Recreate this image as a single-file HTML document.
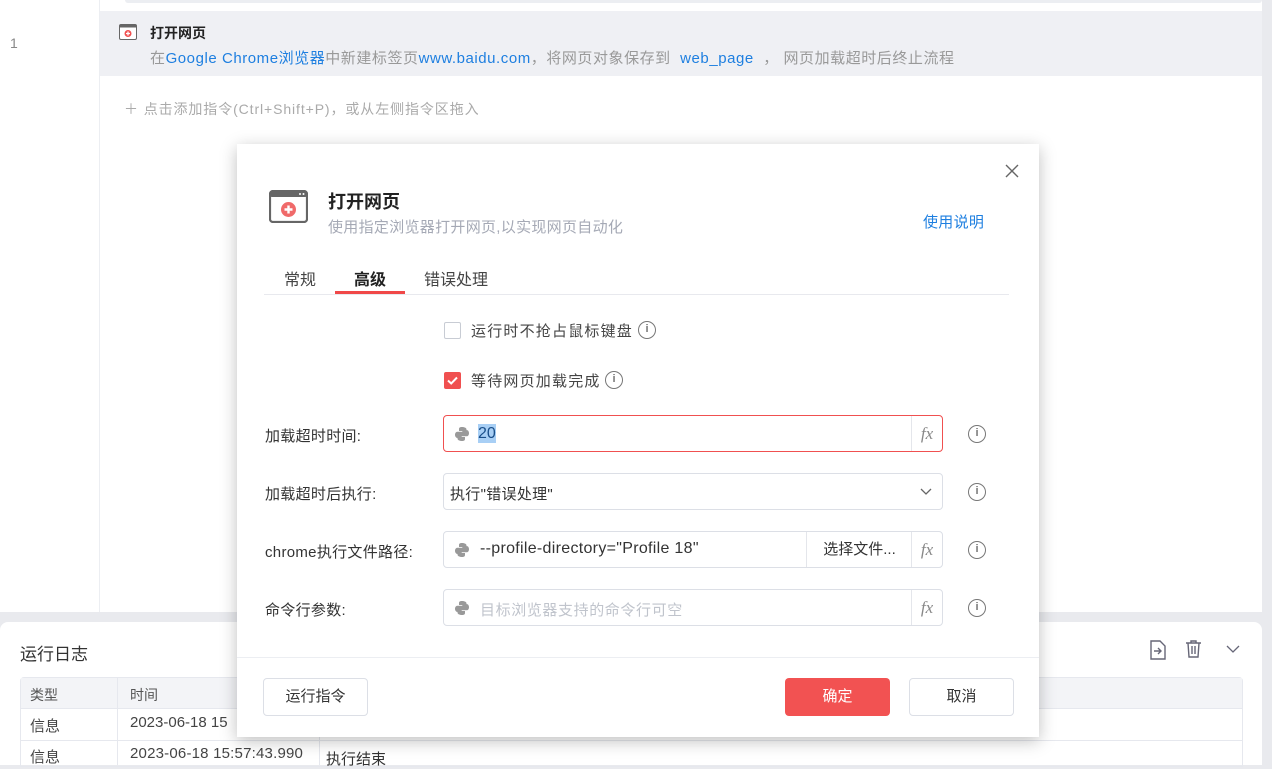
<!DOCTYPE html><html><head><meta charset="utf-8"><style>
*{box-sizing:border-box;margin:0;padding:0}
body{width:1272px;height:765px;overflow:hidden;background:#e9eaee;font-family:"Liberation Sans","Noto Sans CJK SC",sans-serif;position:relative;color:#333}
.abs{position:absolute}
.fx{font-family:"Liberation Serif",serif;font-style:italic;color:#888;font-size:17px}
.info{width:18px;height:18px;border:1.5px solid #777;border-radius:50%;font-size:11px;color:#777;text-align:center;line-height:15px;font-family:"Liberation Sans",sans-serif;font-weight:bold}
.inp{position:absolute;left:443px;width:500px;height:37px;border:1px solid #dcdfe6;border-radius:4px;background:#fff}
.lbl{position:absolute;left:265px;font-size:15px;color:#333;letter-spacing:.3px}
.py{position:absolute;left:10px;top:10px;width:16px;height:16px}
.fxb{position:absolute;right:0;top:0;width:31px;height:100%;border-left:1px solid #e4e6eb;text-align:center;line-height:35px}
</style></head><body>
<div class="abs" style="left:0;top:0;width:1262px;height:612px;background:#fff"></div>
<div class="abs" style="left:125px;top:0;width:1137px;height:3px;background:#eceef2;border-radius:0 0 6px 6px"></div>
<div class="abs" style="left:99px;top:0;width:1px;height:612px;background:#eceef2"></div>
<div class="abs" style="left:100px;top:11px;width:1162px;height:65px;background:#eff0f4"></div>
<div class="abs" style="left:10px;top:35px;font-size:14px;color:#888">1</div>
<svg class="abs" style="left:119px;top:24px" width="18" height="16" viewBox="0 0 18 16"><rect x="0.5" y="0.5" width="17" height="15" rx="1.5" fill="#fff" stroke="#666"/><rect x="0.5" y="0.5" width="17" height="3" fill="#666"/><circle cx="9" cy="9.5" r="3.5" fill="#f05050"/><path d="M9 7.5v4M7 9.5h4" stroke="#fff" stroke-width="1.3"/></svg>
<div class="abs" style="left:150px;top:23px;font-size:14px;font-weight:bold;color:#222">打开网页</div>
<div class="abs" style="left:150px;top:47px;font-size:15px;color:#999;white-space:nowrap;letter-spacing:.55px">在<span style="color:#1e7fe0">Google Chrome浏览器</span>中新建标签页<span style="color:#1e7fe0">www.baidu.com</span>，将网页对象保存到 <span style="color:#1e7fe0">&nbsp;web_page&nbsp;</span> ， 网页加载超时后终止流程</div>
<div class="abs" style="left:124px;top:99px;font-size:14px;color:#aaa;letter-spacing:.9px">＋ 点击添加指令(Ctrl+Shift+P)，或从左侧指令区拖入</div>

<div class="abs" style="left:0;top:622px;width:1262px;height:143px;background:#fff;border-radius:8px 8px 0 0"></div>
<div class="abs" style="left:20px;top:640px;font-size:17px;color:#333">运行日志</div>
<svg class="abs" style="left:1149px;top:640px" width="18" height="20" viewBox="0 0 18 20" fill="none" stroke="#667" stroke-width="1.4"><path d="M2 1h9l5 5v13H2z"/><path d="M5 11h7M9 8l3 3-3 3"/></svg>
<svg class="abs" style="left:1185px;top:640px" width="17" height="18" viewBox="0 0 17 18" fill="none" stroke="#667" stroke-width="1.4"><path d="M1 3h15M6 3V1h5v2M3 3l1 14h9l1-14M7 6v8M10 6v8"/></svg>
<svg class="abs" style="left:1226px;top:645px" width="14" height="9"><path d="M1 1l6 6 6-6" fill="none" stroke="#667" stroke-width="1.3"/></svg>
<div class="abs" style="left:20px;top:677px;width:1223px;height:90px;border:1px solid #e6e8ee;border-radius:4px 4px 0 0"></div>
<div class="abs" style="left:21px;top:678px;width:1221px;height:31px;background:#f3f4f7;border-bottom:1px solid #e6e8ee"></div>
<div class="abs" style="left:21px;top:740px;width:1221px;height:1px;background:#e6e8ee"></div>
<div class="abs" style="left:117px;top:678px;width:1px;height:87px;background:#e6e8ee"></div>
<div class="abs" style="left:319px;top:678px;width:1px;height:87px;background:#e6e8ee"></div>
<div class="abs" style="left:30px;top:685px;font-size:14px;color:#555">类型</div>
<div class="abs" style="left:130px;top:685px;font-size:14px;color:#555">时间</div>
<div class="abs" style="left:30px;top:715px;font-size:15px;color:#444">信息</div>
<div class="abs" style="left:130px;top:714px;font-size:15px;color:#444">2023-06-18 15</div>
<div class="abs" style="left:30px;top:746px;font-size:15px;color:#444">信息</div>
<div class="abs" style="left:130px;top:745px;font-size:15px;color:#444;letter-spacing:.2px">2023-06-18 15:57:43.990</div>
<div class="abs" style="left:326px;top:748px;font-size:15px;color:#333">执行结束</div>

<div class="abs" style="left:237px;top:144px;width:802px;height:593px;background:#fff;box-shadow:0 4px 16px rgba(0,0,0,.25)">
</div>
<svg class="abs" style="left:1005px;top:164px" width="14" height="14"><path d="M1 1l12 12M13 1L1 13" stroke="#666" stroke-width="1.4"/></svg>
<svg class="abs" style="left:269px;top:190px" width="39" height="33" viewBox="0 0 39 33"><rect x="1" y="1" width="37" height="31" rx="3" fill="#fff" stroke="#666" stroke-width="2.2"/><rect x="1" y="1" width="37" height="6" rx="2" fill="#666"/><circle cx="31" cy="4" r="1" fill="#fff"/><circle cx="34.5" cy="4" r="1" fill="#fff"/><circle cx="19.5" cy="19.5" r="7.5" fill="#f06a6a"/><path d="M19.5 15.5v8M15.5 19.5h8" stroke="#fff" stroke-width="2.4"/></svg>
<div class="abs" style="left:328px;top:188px;font-size:18px;font-weight:bold;color:#222">打开网页</div>
<div class="abs" style="left:328px;top:216px;font-size:15px;color:#a5a9b5;letter-spacing:.3px">使用指定浏览器打开网页,以实现网页自动化</div>
<div class="abs" style="left:923px;top:211px;font-size:15px;color:#1e7fe0;letter-spacing:.3px">使用说明</div>
<div class="abs" style="left:264px;top:294px;width:745px;height:1px;background:#e8e9ee"></div>
<div class="abs" style="left:284px;top:266px;font-size:16px;color:#444">常规</div>
<div class="abs" style="left:354px;top:266px;font-size:16px;color:#222;font-weight:bold">高级</div>
<div class="abs" style="left:335px;top:291px;width:70px;height:3px;background:#f04848"></div>
<div class="abs" style="left:424px;top:266px;font-size:16px;color:#444">错误处理</div>

<div class="abs" style="left:444px;top:322px;width:17px;height:17px;border:1px solid #c8ccd4;border-radius:2px"></div>
<div class="abs" style="left:471px;top:320px;font-size:15px;color:#444;letter-spacing:1.2px">运行时不抢占鼠标键盘</div>
<div class="abs info" style="left:638px;top:321px">i</div>
<div class="abs" style="left:444px;top:372px;width:17px;height:17px;background:#f05050;border-radius:2px"></div>
<svg class="abs" style="left:444px;top:372px" width="17" height="17"><path d="M4 8.5l3.2 3L13 5.5" fill="none" stroke="#fff" stroke-width="2"/></svg>
<div class="abs" style="left:471px;top:370px;font-size:15px;color:#444;letter-spacing:1.2px">等待网页加载完成</div>
<div class="abs info" style="left:605px;top:371px">i</div>

<div class="lbl" style="top:425px">加载超时时间:</div>
<div class="inp" style="top:415px;border-color:#f05050"><svg class="py" viewBox="0 0 16 16"><path d="M8 1c-3 0-3 1.3-3 2.5V5h3.3v.7H3.5C2 5.7 1 7 1 8.8s1 3.2 2.5 3.2H5V10.4c0-1.3 1-2.3 2.3-2.3h3.3c1 0 1.9-.9 1.9-2V3.5C12.5 2.2 11 1 8 1zM15 7.2c0-1.8-1-3.2-2.5-3.2H11v1.6c0 1.3-1 2.3-2.3 2.3H5.4c-1 0-1.9.9-1.9 2v2.6C3.5 13.8 5 15 8 15s3-1.3 3-2.5V11H7.7v-.7h4.8C14 10.3 15 9 15 7.2z" fill="#999"/></svg><span class="abs" style="left:34px;top:8px;font-size:16px;background:#a8cff5;color:#1a4f8a;line-height:19px">20</span><div class="fxb fx">fx</div></div>
<div class="abs info" style="left:968px;top:425px">i</div>

<div class="lbl" style="top:483px">加载超时后执行:</div>
<div class="inp" style="top:473px"><span class="abs" style="left:6px;top:9px;font-size:15px;color:#333;letter-spacing:.3px">执行"错误处理"</span><svg class="abs" style="left:476px;top:14px" width="12" height="8"><path d="M1 1l5 5 5-5" fill="none" stroke="#666" stroke-width="1.3"/></svg></div>
<div class="abs info" style="left:968px;top:483px">i</div>

<div class="lbl" style="top:541px">chrome执行文件路径:</div>
<div class="inp" style="top:531px"><svg class="py" viewBox="0 0 16 16"><path d="M8 1c-3 0-3 1.3-3 2.5V5h3.3v.7H3.5C2 5.7 1 7 1 8.8s1 3.2 2.5 3.2H5V10.4c0-1.3 1-2.3 2.3-2.3h3.3c1 0 1.9-.9 1.9-2V3.5C12.5 2.2 11 1 8 1zM15 7.2c0-1.8-1-3.2-2.5-3.2H11v1.6c0 1.3-1 2.3-2.3 2.3H5.4c-1 0-1.9.9-1.9 2v2.6C3.5 13.8 5 15 8 15s3-1.3 3-2.5V11H7.7v-.7h4.8C14 10.3 15 9 15 7.2z" fill="#999"/></svg><span class="abs" style="left:36px;top:8px;font-size:16px;color:#333;letter-spacing:.3px">--profile-directory="Profile 18"</span><div class="abs" style="left:362px;top:0;width:106px;height:35px;border-left:1px solid #e4e6eb;font-size:15px;line-height:35px;text-align:center;color:#333">选择文件...</div><div class="fxb fx">fx</div></div>
<div class="abs info" style="left:968px;top:541px">i</div>

<div class="lbl" style="top:599px">命令行参数:</div>
<div class="inp" style="top:589px"><svg class="py" viewBox="0 0 16 16"><path d="M8 1c-3 0-3 1.3-3 2.5V5h3.3v.7H3.5C2 5.7 1 7 1 8.8s1 3.2 2.5 3.2H5V10.4c0-1.3 1-2.3 2.3-2.3h3.3c1 0 1.9-.9 1.9-2V3.5C12.5 2.2 11 1 8 1zM15 7.2c0-1.8-1-3.2-2.5-3.2H11v1.6c0 1.3-1 2.3-2.3 2.3H5.4c-1 0-1.9.9-1.9 2v2.6C3.5 13.8 5 15 8 15s3-1.3 3-2.5V11H7.7v-.7h4.8C14 10.3 15 9 15 7.2z" fill="#999"/></svg><span class="abs" style="left:36px;top:9px;font-size:15px;color:#c0c4cc;letter-spacing:.6px">目标浏览器支持的命令行可空</span><div class="fxb fx">fx</div></div>
<div class="abs info" style="left:968px;top:599px">i</div>

<div class="abs" style="left:237px;top:657px;width:802px;height:1px;background:#eceef2"></div>
<div class="abs" style="left:263px;top:678px;width:105px;height:38px;border:1px solid #dcdfe6;border-radius:4px;text-align:center;line-height:36px;font-size:15px;color:#333">运行指令</div>
<div class="abs" style="left:785px;top:678px;width:105px;height:38px;background:#f25252;border-radius:4px;text-align:center;line-height:38px;font-size:15px;color:#fff">确定</div>
<div class="abs" style="left:909px;top:678px;width:105px;height:38px;border:1px solid #dcdfe6;border-radius:4px;text-align:center;line-height:36px;font-size:15px;color:#333">取消</div>
</body></html>
